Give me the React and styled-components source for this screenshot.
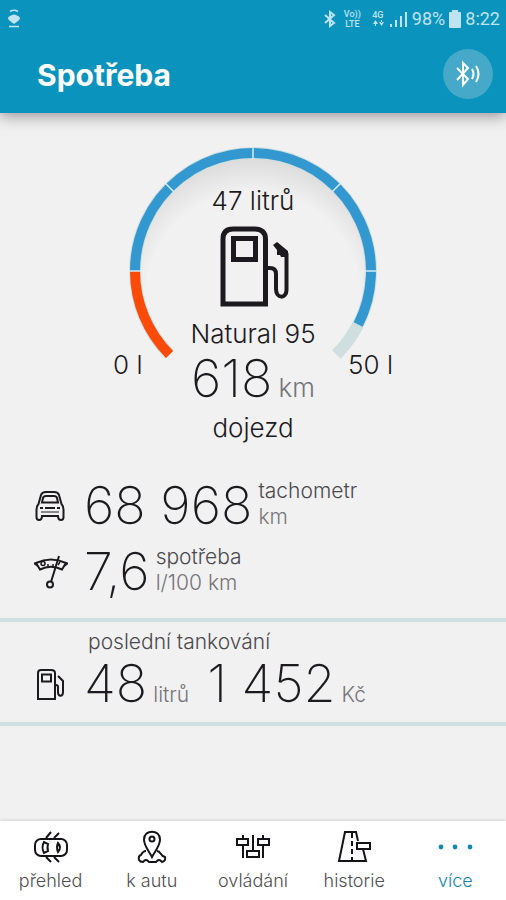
import React from "react";
import styled, { createGlobalStyle } from "styled-components";

const GlobalStyle = createGlobalStyle`
  *, *::before, *::after { box-sizing: border-box; }
  body {
    margin: 0;
    background: #f1f1f1;
    color: #1c1a1e;
    font-family: Inter, "Open Sans", sans-serif;
    font-weight: 300;
  }
`;

const Page = styled.div`
  display: flex;
  flex-direction: column;
  min-height: 100vh;
`;

const Header = styled.header`
  background: #0a93bd;
  box-shadow: 0 3px 14px rgba(60, 50, 60, 0.5);
  color: #fff;
`;

const StatusBar = styled.div`
  display: flex;
  align-items: center;
  justify-content: space-between;
  height: 37px;
  padding: 0 6px;
  color: #bfe3f0;
  font: 400 18px/24px Roboto, sans-serif;
`;

const StatusGroup = styled.div`
  display: flex;
  align-items: center;
  gap: ${(p) => p.$gap || 4}px;
`;

const StackedText = styled.span`
  display: flex;
  flex-direction: column;
  align-items: center;
  font: 500 9px/10px Roboto, sans-serif;
`;

const TitleBar = styled.div`
  display: flex;
  align-items: center;
  justify-content: space-between;
  height: 76px;
  padding: 0 13px 2px 37px;
`;

const Title = styled.h1`
  margin: 0;
  padding-top: 2px;
  font-size: 30px;
  line-height: 36px;
  font-weight: 700;
`;

const RoundButton = styled.button`
  display: grid;
  place-items: center;
  width: 50px;
  height: 50px;
  padding: 0;
  border: 0;
  border-radius: 50%;
  background: #46a9c9;
  color: #fff;
`;

const Main = styled.main`
  flex: 1;
`;

const Gauge = styled.section`
  display: grid;
  justify-items: center;
  padding-top: 34px;

  > * {
    grid-area: 1 / 1;
  }
`;

const Readout = styled.div`
  display: flex;
  flex-direction: column;
  align-items: center;
  padding-top: 40px;
  font-size: 26px;
  line-height: 28px;
`;

const PumpSlot = styled.div`
  height: 84px;
  margin: 11px 0 10px;
`;

const RangeRow = styled.div`
  display: grid;
  grid-template-columns: 78px auto 78px;
  justify-content: center;
  margin-top: 3px;
`;

const RangeEnd = styled.span`
  font-size: 26px;
  line-height: 28px;
  text-align: ${(p) => (p.$right ? "right" : "left")};
`;

const Value = styled.span`
  font-size: 52px;
  line-height: 56px;
  font-weight: 200;
  white-space: nowrap;
`;

const Unit = styled.span`
  margin-left: 6px;
  color: #77757a;
  font-size: ${(p) => (p.$large ? 26 : 21)}px;
  line-height: 24px;
  font-weight: 300;
`;

const Caption = styled.span`
  margin-top: 5px;
  line-height: 32px;
`;

const Stats = styled.section`
  display: grid;
  gap: 10px;
  padding: 34px 24px 18px 34px;
`;

const Row = styled.div`
  display: grid;
  grid-template-columns: 32px 1fr;
  align-items: center;
  column-gap: 18px;
`;

const Figures = styled.div`
  display: flex;
  align-items: baseline;
`;

const Labels = styled.div`
  display: flex;
  flex-direction: column;
  align-self: flex-start;
  margin-left: 6px;
  color: #4b494e;
  font-size: 21px;
  line-height: 26px;
`;

const Muted = styled.span`
  color: #77757a;
`;

const Refuel = styled.section`
  padding: 8px 24px 10px 34px;
  border: solid #cddfe1;
  border-width: 4px 0;
`;

const SectionTitle = styled.h2`
  margin: 0 0 2px 54px;
  color: #4b494e;
  font-size: 21px;
  line-height: 24px;
  font-weight: 300;
`;

const Price = styled(Value)`
  margin-left: 18px;
`;

const Nav = styled.nav`
  display: grid;
  grid-template-columns: repeat(5, 1fr);
  height: 79px;
  background: #fff;
  box-shadow: 0 -1px 3px rgba(0, 0, 0, 0.12);
`;

const NavItem = styled.a`
  display: flex;
  flex-direction: column;
  align-items: center;
  gap: 4px;
  padding-top: 8px;
  color: ${(p) => (p.$active ? "#1587ae" : "#504e52")};
  font-size: 18px;
  line-height: 24px;
  text-decoration: none;

  svg {
    color: ${(p) => (p.$active ? "#1587ae" : "#151317")};
  }
`;

const Stroke = ({ w, h, box, sw = 2, children, ...rest }) => (
  <svg
    width={w}
    height={h}
    viewBox={box || `0 0 ${w} ${h}`}
    fill="none"
    stroke="currentColor"
    strokeWidth={sw}
    aria-hidden="true"
    {...rest}
  >
    {children}
  </svg>
);

const point = (deg, r) => {
  const a = (deg * Math.PI) / 180;
  return `${(124 + r * Math.cos(a)).toFixed(2)} ${(124 + r * Math.sin(a)).toFixed(2)}`;
};

const arc = (from, to, r = 118) =>
  `M${point(from, r)}A${r} ${r} 0 ${to - from > 180 ? 1 : 0} 1 ${point(to, r)}`;

const Dial = () => (
  <svg width="248" height="248" viewBox="0 0 248 248" fill="none" aria-hidden="true">
    <defs>
      <radialGradient id="shade" gradientUnits="userSpaceOnUse" cx="124" cy="152" r="141">
        <stop offset="0.76" stopColor="#000" stopOpacity="0" />
        <stop offset="1" stopColor="#000" stopOpacity="0.09" />
      </radialGradient>
    </defs>
    <circle cx="124" cy="124" r="113" fill="url(#shade)" />
    <path d={arc(135, 405)} stroke="#cfdfe0" strokeWidth="12" />
    <path d={arc(135, 180)} stroke="#fc4a08" strokeWidth="10" />
    <path d={arc(180, 387)} stroke="#3398cf" strokeWidth="10" />
    {[180, 225, 270, 315, 360].map((deg) => (
      <path key={deg} d={`M${point(deg, 112)}L${point(deg, 124)}`} stroke="#d5edf7" strokeWidth="1.5" />
    ))}
  </svg>
);

const BigPump = () => (
  <Stroke w={76} h={84} sw={5}>
    <path d="M8 78V13C8 6 12 3 18 3H40C46 3 50.500 6 50.500 13V78Z" />
    <path d="M18.500 12.500H40.500V33.500H18.500Z" />
    <path
      d="M52 42H55C59 42 61 44 61 48V63C61 73 71.500 73 71.500 64V28L61 18"
      strokeWidth="4"
    />
    <path d="M58 19L62 16L73 25V31H66L65 29H62V24Z" fill="currentColor" stroke="none" />
  </Stroke>
);

const SmallPump = () => (
  <Stroke w={32} h={34}>
    <path d="M4 32V6Q4 3 7 3H17Q21 3 21 6V32Z" />
    <path d="M8 7.500H17V14.500H8Z" />
    <path d="M21 18H22Q24 18 24 20V25C24 30 29 30 29 25V14L24 9" />
  </Stroke>
);

const CarFront = () => (
  <Stroke w={32} h={32}>
    <path d="M8 12.500L9 8Q9.500 6 12 6H20Q22.500 6 23 8L24 12.500Z" />
    <path d="M4.500 14L7 5Q8 2 12 2H20Q24 2 25 5L27.500 14Q29.500 16 29.500 20V27Q29.500 30 27 30Q24 30 24 26H8Q8 30 5 30Q2.500 30 2.500 27V20Q2.500 16 4.500 14Z" />
    <path d="M6 18H9M11 18H21M23 18H26" />
    <path d="M7 22H25" strokeWidth="1" />
  </Stroke>
);

const Consumption = () => (
  <Stroke w={34} h={34}>
    <path d="M2 8Q17 1 32 8L28 14.500Q17 9 6 14.500Z" />
    <path d="M0 8L4 11M34 8L30 11" />
    <circle cx="9" cy="8.500" r="2" strokeWidth="1.500" />
    <path d="M14 9V12M19 9V12M26 7L24 10" strokeWidth="1.500" />
    <path d="M25 1L17 27" />
    <circle cx="16" cy="29.500" r="3" />
  </Stroke>
);

const CarTop = () => (
  <Stroke w={36} h={36}>
    <rect x="2" y="10" width="32" height="17" rx="6" />
    <path d="M11 13Q8 18.500 11 24L15 22Q14 18.500 15 15ZM25 14Q29 18.500 25 23Q23 18.500 25 14Z" />
    <path d="M13 9L18 3M21 9L26 4M13 28L18 33M21 28L26 33" />
  </Stroke>
);

const CarPin = () => (
  <Stroke w={36} h={36}>
    <path d="M18 28C15 22 10 17 10 10.500C10 0 26 0 26 10.500C26 17 21 22 18 28Z" />
    <circle cx="18" cy="10" r="2.500" />
    <path d="M12 22Q9 22 7 26Q4 27 5 31Q6 33 9 33Q12 29 15 33H22Q25 29 28 33Q32 32 31 28Q28 27 27 25Q25 22 23 22" />
  </Stroke>
);

const Sliders = () => (
  <Stroke w={36} h={36}>
    <path d="M8 6V10M8 17V29M28 6V10M28 17V29M18 6V22" />
    <path d="M2 10H13V16H2ZM23 10H34V16H23ZM12 22H24V28H12Z" />
  </Stroke>
);

const Road = () => (
  <Stroke w={36} h={36}>
    <path d="M22 12L20 3H9L3 32H30L27 20" />
    <path d="M16 4V32" strokeDasharray="5 3" />
    <path d="M21 14H34V20H21Z" />
  </Stroke>
);

const Dots = () => (
  <Stroke w={36} h={36} fill="currentColor" stroke="none">
    <circle cx="4" cy="18" r="2.400" />
    <circle cx="18" cy="18" r="2.400" />
    <circle cx="33" cy="18" r="2.400" />
  </Stroke>
);

const navItems = [
  { label: "přehled", icon: <CarTop /> },
  { label: "k autu", icon: <CarPin /> },
  { label: "ovládání", icon: <Sliders /> },
  { label: "historie", icon: <Road /> },
  { label: "více", icon: <Dots />, active: true },
];

export default function App() {
  return (
    <Page>
      <GlobalStyle />
      <Header>
        <StatusBar>
          <Stroke w={16} h={20} sw={1.5}>
            <path d="M4 2.500Q8 0 12 2.500M3 17.500H13" />
            <path d="M4 7Q8 4 12 7Q16 9 12 12L8 15L4 12Q0 9 4 7Z" fill="currentColor" stroke="none" />
          </Stroke>
          <StatusGroup>
            <StatusGroup $gap={11}>
              <StatusGroup $gap={7}>
                <Stroke w={14} h={18}>
                  <path d="M2 5L11 13L7 16V2L11 5L2 13" />
                </Stroke>
                <StackedText>
                  <span>Vo))</span>
                  <span>LTE</span>
                </StackedText>
              </StatusGroup>
              <StackedText>
                <span>4G</span>
                <Stroke w={12} h={7} fill="currentColor" stroke="none">
                  <path d="M1 4L3.500 0L6 4ZM3 3H4V6H3ZM7 2L9.500 6L12 2ZM9 0H10V3H9Z" />
                </Stroke>
              </StackedText>
            </StatusGroup>
            <Stroke w={20} h={18}>
              <path d="M3 17V14M8 17V10M13 17V6M18 17V2" />
            </Stroke>
            <span>98%</span>
            <Stroke w={12} h={18} fill="currentColor" stroke="none">
              <path d="M3 2V0H9V2H11Q12 2 12 3V17Q12 18 11 18H1Q0 18 0 17V3Q0 2 1 2Z" />
            </Stroke>
            <span>8:22</span>
          </StatusGroup>
        </StatusBar>
        <TitleBar>
          <Title>Spotřeba</Title>
          <RoundButton type="button" aria-label="Bluetooth">
            <Stroke w={26} h={28}>
              <path d="M2 8L13 19L8 25V3L13 8L2 20" />
              <path d="M17 9Q20 14 17 19M21 6Q26 14 21 22" />
            </Stroke>
          </RoundButton>
        </TitleBar>
      </Header>

      <Main>
        <Gauge>
          <Dial />
          <Readout>
            <span>47 litrů</span>
            <PumpSlot>
              <BigPump />
            </PumpSlot>
            <span>Natural 95</span>
            <RangeRow>
              <RangeEnd>0 l</RangeEnd>
              <Value>
                618<Unit $large>km</Unit>
              </Value>
              <RangeEnd $right>50 l</RangeEnd>
            </RangeRow>
            <Caption>dojezd</Caption>
          </Readout>
        </Gauge>

        <Stats>
          <Row>
            <CarFront />
            <Figures>
              <Value>68 968</Value>
              <Labels>
                <span>tachometr</span>
                <Muted>km</Muted>
              </Labels>
            </Figures>
          </Row>
          <Row>
            <Consumption />
            <Figures>
              <Value>7,6</Value>
              <Labels>
                <span>spotřeba</span>
                <Muted>l/100 km</Muted>
              </Labels>
            </Figures>
          </Row>
        </Stats>

        <Refuel>
          <SectionTitle>poslední tankování</SectionTitle>
          <Row>
            <SmallPump />
            <Figures>
              <Value>
                48<Unit>litrů</Unit>
              </Value>
              <Price>
                1 452<Unit>Kč</Unit>
              </Price>
            </Figures>
          </Row>
        </Refuel>
      </Main>

      <Nav aria-label="Hlavní nabídka">
        {navItems.map(({ label, icon, active }) => (
          <NavItem key={label} href="#" $active={active} aria-current={active ? "page" : undefined}>
            {icon}
            {label}
          </NavItem>
        ))}
      </Nav>
    </Page>
  );
}
